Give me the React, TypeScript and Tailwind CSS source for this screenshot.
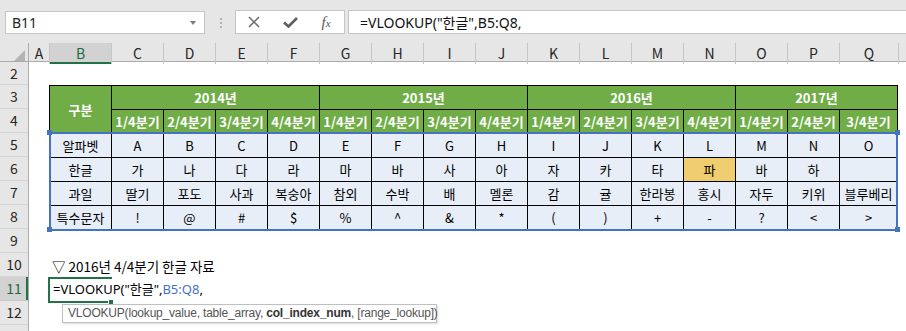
import React from "react";

const sheetFont = { fontFamily: "'Noto Sans CJK KR', 'Noto Sans', sans-serif" };
const uiFont = { fontFamily: "'Noto Sans', 'Noto Sans CJK KR', sans-serif" };
const tipFont = { fontFamily: "'Liberation Sans', 'Noto Sans', sans-serif" };

const colLetters = ["A", "B", "C", "D", "E", "F", "G", "H", "I", "J", "K", "L", "M", "N", "O", "P", "Q"];

const years = [
  { label: "2014년", span: "col-span-4" },
  { label: "2015년", span: "col-span-4" },
  { label: "2016년", span: "col-span-4" },
  { label: "2017년", span: "col-span-3" },
];

const quarters = [
  "1/4분기", "2/4분기", "3/4분기", "4/4분기",
  "1/4분기", "2/4분기", "3/4분기", "4/4분기",
  "1/4분기", "2/4분기", "3/4분기", "4/4분기",
  "1/4분기", "2/4분기", "3/4분기",
];

const rows = [
  { label: "알파벳", values: ["A", "B", "C", "D", "E", "F", "G", "H", "I", "J", "K", "L", "M", "N", "O"] },
  { label: "한글", values: ["가", "나", "다", "라", "마", "바", "사", "아", "자", "카", "타", "파", "바", "하", ""] },
  { label: "과일", values: ["딸기", "포도", "사과", "복숭아", "참외", "수박", "배", "멜론", "감", "귤", "한라봉", "홍시", "자두", "키위", "블루베리"] },
  { label: "특수문자", values: ["!", "@", "#", "$", "%", "^", "&", "*", "(", ")", "+", "-", "?", "<", ">"] },
];

// row 13 is cut off at the bottom edge, so its number never shows
const rowNumbers = [2, 3, 4, 5, 6, 7, 8, 9, 10, 11, 12, 0];

function TopBar() {
  return (
    <div className="flex h-[43px] bg-[#E6E6E6] pt-[10px]" style={uiFont}>
      <div className="ml-[5px] mt-[1px] flex h-[23px] w-[200px] items-center justify-between border border-[#C6C6C6] bg-white pl-[6px] pr-[8px]">
        <span className="text-[14px] text-[#222]">B11</span>
        <svg width="6" height="4" viewBox="0 0 6 4">
          <path d="M0 0H6L3 4Z" fill="#7A7A7A" />
        </svg>
      </div>
      <div className="ml-[15px] mt-[8px] flex flex-col gap-[2px]">
        <div className="h-[2px] w-[2px] bg-[#B4B4B4]" />
        <div className="h-[2px] w-[2px] bg-[#B4B4B4]" />
        <div className="h-[2px] w-[2px] bg-[#B4B4B4]" />
      </div>
      <div className="ml-[13px] flex h-[24px] w-[110px] items-center border border-[#C6C6C6] bg-white">
        <div className="flex w-[36px] justify-center">
          <svg width="12" height="12" viewBox="0 0 12 12">
            <path d="M1 1L11 11M11 1L1 11" stroke="#6B6B6B" strokeWidth="1.5" />
          </svg>
        </div>
        <div className="flex w-[36px] justify-center">
          <svg width="15" height="11" viewBox="0 0 15 11">
            <path d="M1 5.5L5.5 9.5L14 1" stroke="#5E5E5E" strokeWidth="2.6" fill="none" />
          </svg>
        </div>
        <div className="flex w-[36px] justify-center">
          <span className="text-[15px] italic leading-none text-[#555]" style={{ fontFamily: "'Liberation Serif', serif" }}>
            f<span className="text-[11px]">x</span>
          </span>
        </div>
      </div>
      <div className="ml-[3px] flex h-[24px] flex-1 items-center border border-r-0 border-[#C6C6C6] bg-white pl-[11px]">
        <span className="whitespace-nowrap text-[14px] text-[#111]">=VLOOKUP("한글",B5:Q8,</span>
      </div>
    </div>
  );
}

function ColumnHeader() {
  return (
    <div
      className="grid h-[19px] grid-cols-[29px_20px_62px_repeat(14,52px)_59px_1fr] border-b border-[#ABABAB] bg-[#E6E6E6] text-[14px] text-[#262626]"
      style={sheetFont}
    >
      <div className="flex items-end justify-end border-r border-[#ABABAB] pb-[3px] pr-[3px]">
        <svg width="11" height="11" viewBox="0 0 11 11">
          <path d="M11 0V11H0Z" fill="#B4B4B4" />
        </svg>
      </div>
      {colLetters.map((c) => (
        <div
          key={c}
          className={
            c === "B"
              ? "flex items-center justify-center border-l border-[#C6C6C6] bg-[#D2D2D2] text-[#1E6B42] shadow-[inset_0_-2px_0_#217346]"
              : c === "A"
              ? "flex items-center justify-center"
              : "flex items-center justify-center border-l border-[#C6C6C6]"
          }
        >
          {c}
        </div>
      ))}
      <div className="border-l border-[#C6C6C6]" />
    </div>
  );
}

function RowHeader() {
  return (
    <div className="flex w-[29px] flex-col border-r border-[#ABABAB] bg-[#E6E6E6] text-[14px] text-[#262626]" style={sheetFont}>
      {rowNumbers.map((n) => (
        <div
          key={n}
          className={
            (n === 2 ? "h-[23px] " : "h-[24px] ") +
            (n === 11
              ? "flex shrink-0 items-center justify-center border-b border-[#C8C8C8] bg-[#D2D2D2] text-[#1E6B42] shadow-[inset_-2px_0_0_#217346]"
              : "flex shrink-0 items-center justify-center border-b border-[#D4D4D4]")
          }
        >
          {n > 0 ? n : ""}
        </div>
      ))}
    </div>
  );
}

function DataTable() {
  return (
    <div
      className="ml-[20px] grid w-[849px] grid-cols-[61px_repeat(14,51px)_57px] grid-rows-[repeat(6,23px)] gap-px bg-black p-px text-[13px]"
      style={sheetFont}
    >
      <div className="row-span-2 flex items-center justify-center bg-[#70AD47] font-bold text-white">구분</div>
      {years.map((y) => (
        <div key={y.label} className={y.span + " flex items-center justify-center bg-[#70AD47] font-bold text-white"}>
          {y.label}
        </div>
      ))}
      {quarters.map((q, i) => (
        <div key={i} className="flex items-center justify-center whitespace-nowrap bg-[#70AD47] font-bold text-white">
          {q}
        </div>
      ))}
      {rows.map((r) => (
        <React.Fragment key={r.label}>
          <div className="flex items-center justify-center bg-[#E8EEF8] text-black">{r.label}</div>
          {r.values.map((v, i) => (
            <div
              key={i}
              className={
                r.label === "한글" && i === 11
                  ? "flex items-center justify-center bg-[#F0CD6E] text-black"
                  : "flex items-center justify-center whitespace-nowrap bg-[#E8EEF8] text-black"
              }
            >
              {v}
            </div>
          ))}
        </React.Fragment>
      ))}
    </div>
  );
}

function Corner({ className }: { className: string }) {
  return <div className={"absolute h-[5px] w-[5px] bg-[#4472C4] " + className} />;
}

export default function App() {
  return (
    <div className="h-[331px] w-[906px] overflow-hidden bg-white">
      <TopBar />
      <ColumnHeader />
      <div className="flex">
        <RowHeader />
        <div className="relative flex-1" style={sheetFont}>
          <div className="h-[23px]" />
          <DataTable />
          <div className="h-[23px]" />
          <div className="flex h-[24px] items-end whitespace-nowrap pb-[1px] pl-[23px] text-[13.5px] text-black">
            ▽ 2016년 4/4분기 한글 자료
          </div>
          <div className="flex h-[24px] items-center pl-[24px]" style={uiFont}>
            <span className="relative z-10 whitespace-nowrap bg-white pr-[2px] text-[13px] leading-[20px] text-black">
              =VLOOKUP("한글",<span className="text-[#4472C4]">B5:Q8</span>,
            </span>
          </div>

          {/* reference range border */}
          <div className="absolute left-[20px] top-[70px] h-[99px] w-[849px] border-2 border-[#4472C4]" />
          <Corner className="left-[18px] top-[68px]" />
          <Corner className="left-[866px] top-[68px]" />
          <Corner className="left-[18px] top-[165px]" />
          <Corner className="left-[866px] top-[165px]" />

          {/* active cell */}
          <div className="absolute left-[19px] top-[215px] h-[26px] w-[64px] border-2 border-[#217346]" />
          <div className="absolute left-[79px] top-[237px] z-20 h-[6px] w-[6px] border border-white bg-[#217346]" />

          {/* function tooltip */}
          <div
            className="absolute left-[33px] top-[242px] z-30 h-[19px] w-[375px] whitespace-nowrap border border-[#BFBFBF] bg-white pl-[5px] text-[12px] leading-[17px] tracking-[-0.2px] text-[#555] shadow-[1px_1px_2px_rgba(0,0,0,0.15)]"
            style={tipFont}
          >
            VLOOKUP(lookup_value, table_array, <b className="font-bold text-[#333]">col_index_num</b>, [range_lookup])
          </div>
        </div>
      </div>
    </div>
  );
}
